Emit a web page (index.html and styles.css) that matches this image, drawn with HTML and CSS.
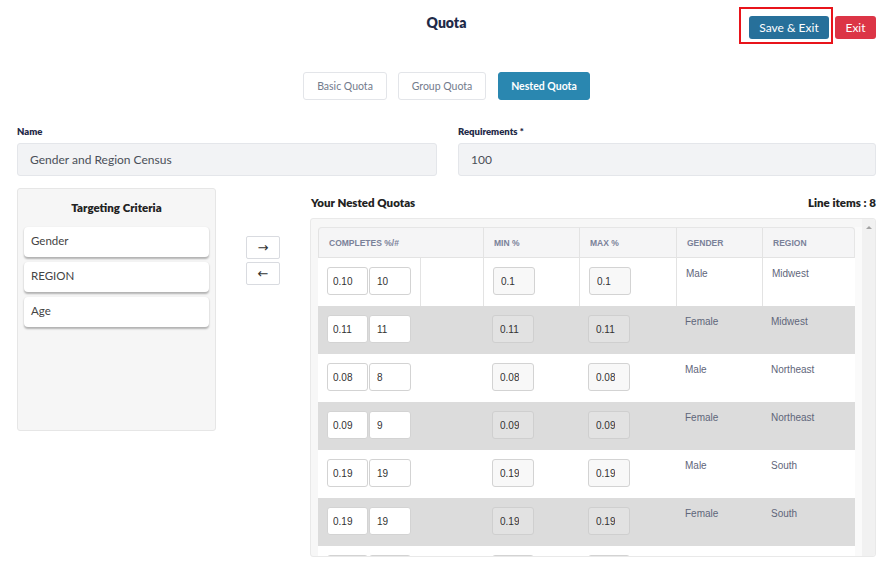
FILE: index.html
```html
<!DOCTYPE html>
<html>
<head>
<meta charset="utf-8">
<link rel="stylesheet" href="styles.css">
</head>
<body>
<div class="page">
  <header class="topbar">
    <div class="spacer"></div>
    <h1 class="title">Quota</h1>
    <div class="actions">
      <div class="highlight"><button class="btn btn-save">Save &amp; Exit</button></div>
      <button class="btn btn-exit">Exit</button>
    </div>
  </header>

  <nav class="tabs">
    <button class="tab tab-basic">Basic Quota</button>
    <button class="tab tab-group">Group Quota</button>
    <button class="tab tab-nested active">Nested Quota</button>
  </nav>

  <div class="fields">
    <div class="field">
      <label class="label">Name</label>
      <div class="input">Gender and Region Census</div>
    </div>
    <div class="field">
      <label class="label">Requirements *</label>
      <div class="input">100</div>
    </div>
  </div>

  <div class="workspace">
    <aside class="criteria">
      <div class="criteria-title">Targeting Criteria</div>
      <div class="crit-item">Gender</div>
      <div class="crit-item">REGION</div>
      <div class="crit-item">Age</div>
    </aside>

    <div class="movers">
      <button class="mover">&rarr;</button>
      <button class="mover">&larr;</button>
    </div>

    <section class="nested">
      <div class="nested-head">
        <span>Your Nested Quotas</span>
        <span>Line items : 8</span>
      </div>
      <div class="scroller">
        <div class="table-wrap">
          <table class="qt">
            <colgroup>
              <col class="c1"><col class="c2"><col class="c3"><col class="c4"><col class="c5"><col class="c6">
            </colgroup>
            <thead>
              <tr>
                <th colspan="2">COMPLETES %/#</th>
                <th>MIN %</th>
                <th>MAX %</th>
                <th>GENDER</th>
                <th>REGION</th>
              </tr>
            </thead>
            <tbody>
              <tr class="first">
                <td class="pair"><input class="in" value="0.10" readonly><input class="in in2" value="10" readonly></td>
                <td class="blank"></td>
                <td><input class="in mm" value="0.1" readonly></td>
                <td><input class="in mm" value="0.1" readonly></td>
                <td class="txt">Male</td>
                <td class="txt">Midwest</td>
              </tr>
              <tr class="alt">
                <td class="pair"><input class="in" value="0.11" readonly><input class="in in2" value="11" readonly></td>
                <td class="blank"></td>
                <td><input class="in mm" value="0.11" readonly></td>
                <td><input class="in mm" value="0.11" readonly></td>
                <td class="txt">Female</td>
                <td class="txt">Midwest</td>
              </tr>
              <tr>
                <td class="pair"><input class="in" value="0.08" readonly><input class="in in2" value="8" readonly></td>
                <td class="blank"></td>
                <td><input class="in mm" value="0.08" readonly></td>
                <td><input class="in mm" value="0.08" readonly></td>
                <td class="txt">Male</td>
                <td class="txt">Northeast</td>
              </tr>
              <tr class="alt">
                <td class="pair"><input class="in" value="0.09" readonly><input class="in in2" value="9" readonly></td>
                <td class="blank"></td>
                <td><input class="in mm" value="0.09" readonly></td>
                <td><input class="in mm" value="0.09" readonly></td>
                <td class="txt">Female</td>
                <td class="txt">Northeast</td>
              </tr>
              <tr>
                <td class="pair"><input class="in" value="0.19" readonly><input class="in in2" value="19" readonly></td>
                <td class="blank"></td>
                <td><input class="in mm" value="0.19" readonly></td>
                <td><input class="in mm" value="0.19" readonly></td>
                <td class="txt">Male</td>
                <td class="txt">South</td>
              </tr>
              <tr class="alt">
                <td class="pair"><input class="in" value="0.19" readonly><input class="in in2" value="19" readonly></td>
                <td class="blank"></td>
                <td><input class="in mm" value="0.19" readonly></td>
                <td><input class="in mm" value="0.19" readonly></td>
                <td class="txt">Female</td>
                <td class="txt">South</td>
              </tr>
              <tr>
                <td class="pair"><input class="in" value="0.12" readonly><input class="in in2" value="12" readonly></td>
                <td class="blank"></td>
                <td><input class="in mm" value="0.12" readonly></td>
                <td><input class="in mm" value="0.12" readonly></td>
                <td class="txt"></td>
                <td class="txt"></td>
              </tr>
            </tbody>
          </table>
        </div>
        <div class="gutter"></div>
        <div class="scrollbar"><span class="arrow-up"></span></div>
      </div>
    </section>
  </div>
</div>
</body>
</html>
```

FILE: styles.css
```css
* { box-sizing: border-box; }
html, body { margin: 0; padding: 0; background: #fff; }
body {
  font-family: "Lato", "Noto Sans", sans-serif;
  color: #1f2a48;
  width: 890px;
  height: 574px;
  overflow: hidden;
}
.page { padding: 0 14px 0 17px; }

.topbar {
  display: flex;
  align-items: flex-start;
  height: 72px;
}
.spacer { flex: 1; }
.title {
  margin: 14px 0 0 0;
  font-size: 14px;
  font-weight: 800;
  color: #1f2a48;
  flex: 0 0 auto;
}
.actions {
  flex: 1;
  display: flex;
  justify-content: flex-end;
  align-items: flex-start;
  padding-top: 7px;
}
.highlight {
  border: 2px solid #e8141b;
  padding: 7px 2px 3px 8px;
  margin-right: 2px;
}
.btn {
  border: none;
  font-family: "Lato", "Noto Sans", sans-serif;
  font-size: 12px;
  color: #fff;
  height: 23px;
  border-radius: 3px;
  cursor: pointer;
  padding: 0;
}
.btn-save { background: #27709a; width: 80px; display: block; }
.btn-exit { background: #dc3546; width: 41px; margin-top: 9px; }

.tabs {
  display: flex;
  justify-content: center;
  gap: 11px;
  height: 28px;
}
.tab {
  height: 28px;
  padding: 0;
  font-family: "Lato", "Noto Sans", sans-serif;
  font-size: 10.5px;
  color: #737b8c;
  background: #fff;
  border: 1px solid #e3e5e9;
  border-radius: 3px;
  text-align: center;
}
.tab-basic { width: 84px; }
.tab-group { width: 88px; }
.tab-nested { width: 92px; margin-left: 1px; }
.tab.active {
  background: #2a87b0;
  border-color: #2a87b0;
  color: #fff;
  font-weight: 700;
}

.fields {
  display: grid;
  grid-template-columns: 420px 418px;
  column-gap: 21px;
  margin-top: 25px;
}
.field { display: flex; flex-direction: column; }
.label {
  font-size: 9.5px;
  font-weight: 800;
  color: #1f2a48;
  height: 13px;
  line-height: 13px;
  margin-bottom: 5px;
}
.input {
  height: 33px;
  background: #f2f3f5;
  border: 1px solid #e4e6ea;
  border-radius: 3px;
  font-size: 12px;
  color: #4a4f58;
  line-height: 31px;
  padding-left: 12px;
}

.workspace {
  display: flex;
  align-items: flex-start;
  margin-top: 12px;
}
.criteria {
  width: 199px;
  height: 243px;
  background: #f6f6f6;
  border: 1px solid #e6e6e6;
  border-radius: 3px;
  padding: 0 6px;
}
.criteria-title {
  text-align: center;
  font-size: 11.5px;
  font-weight: 800;
  color: #222;
  height: 38px;
  line-height: 38px;
}
.crit-item {
  background: #fff;
  height: 30px;
  line-height: 28px;
  border-radius: 4px;
  box-shadow: 0 1.5px 2px rgba(0,0,0,0.28);
  font-size: 11.5px;
  color: #444;
  padding-left: 7px;
  margin-bottom: 5px;
}

.movers {
  display: flex;
  flex-direction: column;
  gap: 3px;
  margin-left: 30px;
  margin-top: 48px;
}
.mover {
  width: 34px;
  height: 23px;
  background: #fff;
  border: 1px solid #d9dbe0;
  border-radius: 2px;
  font-family: "DejaVu Sans", sans-serif;
  font-size: 13px;
  color: #333;
  padding: 0;
  line-height: 20px;
}

.nested {
  margin-left: 30px;
  flex: 1;
  display: flex;
  flex-direction: column;
}
.nested-head {
  display: flex;
  justify-content: space-between;
  font-size: 11.5px;
  font-weight: 800;
  color: #222;
  height: 30px;
  line-height: 30px;
  padding-left: 1px;
}
.scroller {
  height: 339px;
  background: #f7f7f7;
  border: 1px solid #e9e9e9;
  border-radius: 3px;
  display: flex;
  padding: 8px 0 0 7px;
  overflow: hidden;
}
.table-wrap { width: 537px; flex: 0 0 537px; }
.gutter { width: 7px; background: #fafafa; }
.scrollbar {
  flex: 1;
  background: #f1f1f1;
  position: relative;
  margin-top: -8px;
}
.arrow-up {
  position: absolute;
  left: 4px;
  top: 7px;
  width: 0;
  height: 0;
  border-left: 3px solid transparent;
  border-right: 3px solid transparent;
  border-bottom: 3px solid #a3a3a3;
}

.qt {
  border-collapse: separate;
  border-spacing: 0;
  table-layout: fixed;
  width: 537px;
  font-family: "Liberation Sans", Arial, sans-serif;
}
.c1 { width: 102px; }
.c2 { width: 63px; }
.c3 { width: 96px; }
.c4 { width: 97px; }
.c5 { width: 86px; }
.c6 { width: 93px; }
.qt th {
  background: #f5f5f6;
  height: 31px;
  text-align: left;
  font-size: 8.5px;
  font-weight: 700;
  color: #7a8199;
  padding: 0 0 0 10px;
  border-top: 1px solid #e6e6e6;
  border-bottom: 1px solid #e3e3e3;
  border-left: 1px solid #e3e3e3;
}
.qt th:first-child { border-top-left-radius: 4px; }
.qt th:last-child { border-right: 1px solid #e6e6e6; border-top-right-radius: 4px; }
.qt td {
  height: 48px;
  background: #fff;
  vertical-align: top;
  padding: 9px 0 0 9px;
}
.qt tr.alt td { background: #dcdcdc; }
.qt tr.first td.blank,
.qt tr.first td:nth-child(3),
.qt tr.first td:nth-child(4),
.qt tr.first td:nth-child(5),
.qt tr.first td:nth-child(6) { border-left: 1px solid #e3e3e3; }
.qt td.pair { white-space: nowrap; }
.qt td.txt {
  font-size: 10px;
  color: #5f667a;
  padding-top: 10px;
}
.in {
  width: 41px;
  height: 28px;
  border: 1px solid #d3d3d3;
  border-radius: 3px;
  background: #fff;
  font-family: "Liberation Sans", Arial, sans-serif;
  font-size: 10px;
  color: #333;
  padding: 0 0 0 5px;
  margin: 0;
  outline: none;
  vertical-align: top;
}
.in2 { width: 42px; margin-left: 1px; padding-left: 7px; }
.in.mm {
  width: 42px;
  background: #f8f8f8;
  padding: 0 14px 0 7px;
}
.qt tr.alt .in.mm { background: #e2e2e2; border-color: #cfcfcf; }
```
